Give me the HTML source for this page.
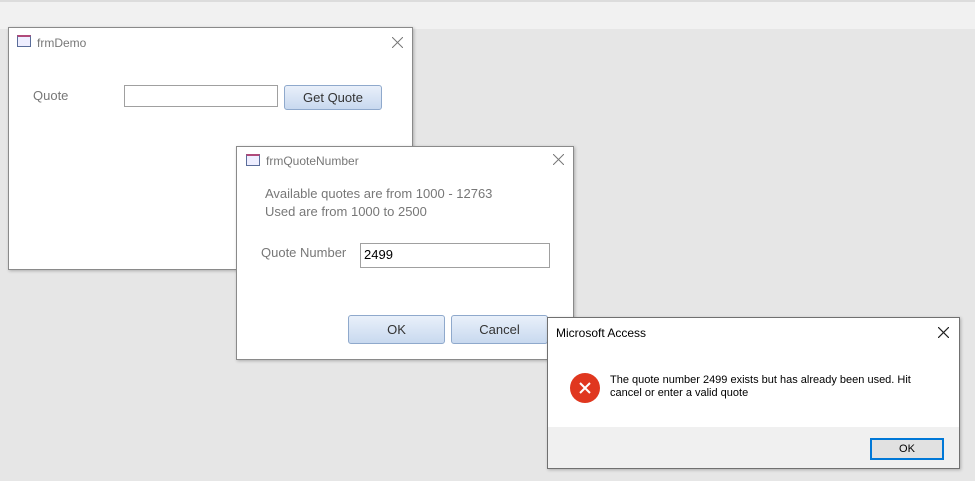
<!DOCTYPE html>
<html><head><style>
body{margin:0;width:975px;height:481px;background:#e6e6e6;position:relative;overflow:hidden;font-family:"Liberation Sans",sans-serif}
.top{position:absolute;left:0;top:0;width:975px;height:27px;background:#f1f1f1;border-top:2px solid #dcdcdc}
.win{position:absolute;background:#fff;border:1px solid #8a8a8a;box-shadow:1px 1px 3px rgba(0,0,0,.25)}
.t{position:absolute;color:#777;font-size:12px}
.x{position:absolute;width:11px;height:11px}
.ic{position:absolute;width:14px;height:12px;border:1px solid #5a6d9a;box-sizing:border-box;border-top:2px solid #b04a7a;background:#eef}
.btn{position:absolute;border:1px solid #8fa9cc;border-radius:3px;background:linear-gradient(#e9f0fa,#c8d9ef);font-size:13px;color:#333;text-align:center}
.inp{position:absolute;border:1px solid #a0a0a0;background:#fff;box-sizing:border-box}
</style></head><body>
<div class="top"></div>
<div class="win" style="left:8px;top:27px;width:403px;height:241px">
 <div class="ic" style="left:8px;top:7px"></div>
 <div class="t" style="left:28px;top:8px">frmDemo</div>
 <svg class="x" style="left:383px;top:9px" viewBox="0 0 11 11"><path d="M0 0L11 11M11 0L0 11" stroke="#777" stroke-width="1"/></svg>
 <div class="t" style="left:24px;top:60px;font-size:13px">Quote</div>
 <div class="inp" style="left:115px;top:57px;width:154px;height:22px"></div>
 <div class="btn" style="left:275px;top:57px;width:96px;height:23px;line-height:23px">Get Quote</div>
</div>
<div class="win" style="left:236px;top:146px;width:336px;height:212px">
 <div class="ic" style="left:9px;top:7px"></div>
 <div class="t" style="left:29px;top:7px">frmQuoteNumber</div>
 <svg class="x" style="left:316px;top:7px" viewBox="0 0 11 11"><path d="M0 0L11 11M11 0L0 11" stroke="#777" stroke-width="1"/></svg>
 <div class="t" style="left:28px;top:38px;font-size:13px;line-height:18px">Available quotes are from 1000 - 12763<br>Used are from 1000 to 2500</div>
 <div class="t" style="left:24px;top:98px;font-size:13px">Quote Number</div>
 <div class="inp" style="left:123px;top:96px;width:190px;height:25px;font-size:13px;color:#000;padding:3px 3px">2499</div>
 <div class="btn" style="left:111px;top:168px;width:95px;height:27px;line-height:27px">OK</div>
 <div class="btn" style="left:214px;top:168px;width:95px;height:27px;line-height:27px">Cancel</div>
</div>
<div class="win" style="left:547px;top:317px;width:411px;height:150px;border-color:#707070">
 <div style="position:absolute;left:8px;top:8px;font-size:12px;color:#000">Microsoft Access</div>
 <svg class="x" style="left:390px;top:9px" viewBox="0 0 11 11"><path d="M0 0L11 11M11 0L0 11" stroke="#222" stroke-width="1.2"/></svg>
 <div style="position:absolute;left:22px;top:55px;width:30px;height:30px;border-radius:50%;background:#e0371f"><svg style="position:absolute;left:9px;top:9px" width="12" height="12" viewBox="0 0 12 12"><path d="M1 1L11 11M11 1L1 11" stroke="#fff" stroke-width="2"/></svg></div>
 <div style="position:absolute;left:62px;top:56px;font-size:11px;line-height:13px;color:#000;width:330px">The quote number 2499 exists but has already been used. Hit cancel or enter a valid quote</div>
 <div style="position:absolute;left:0;top:109px;width:411px;height:41px;background:#f0f0f0"></div>
 <div style="position:absolute;left:322px;top:120px;width:70px;height:18px;border:2px solid #0078d7;background:#e1e1e1;font-size:11px;line-height:18px;text-align:center">OK</div>
</div>
</body></html>
